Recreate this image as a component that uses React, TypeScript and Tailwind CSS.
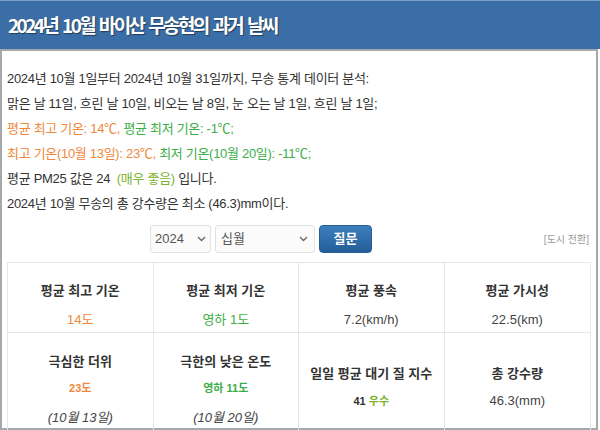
import React from 'react';

const font = { fontFamily: '"Liberation Sans", "Noto Sans CJK KR", sans-serif' };

const Chevron = () => (
  <svg width="9" height="6" viewBox="0 0 9 6" className="text-[#666]">
    <path d="M1 1l3.5 3.5L8 1" fill="none" stroke="currentColor" strokeWidth="1.3" />
  </svg>
);

const App = () => {
  return (
    <div className="w-[600px] h-[430px] overflow-hidden bg-white text-[#333]" style={font}>
      <div className="h-[49px] bg-[#3b6ea6] border-t border-[#7aa0c8] flex items-center pl-[8px]">
        <h1
          className="text-white text-[19px] font-bold tracking-[-2.6px] [word-spacing:3px] [text-shadow:1px_1px_1px_rgba(0,0,0,0.45)]"
          style={{ fontFamily: '"Noto Sans CJK KR", sans-serif' }}
        >
          2024년 10월 바이산 무송현의 과거 날씨
        </h1>
      </div>
      <div className="w-[598px] h-[381px] border-2 border-[#a5a8ad] bg-white">
        <div className="pl-[5px] pt-[15px] text-[13px] leading-[25px] tracking-[-0.3px]">
          <p>2024년 10월 1일부터 2024년 10월 31일까지, 무송 통계 데이터 분석:</p>
          <p>맑은 날 11일, 흐린 날 10일, 비오는 날 8일, 눈 오는 날 1일, 흐린 날 1일;</p>
          <p>
            <span className="text-[#f0883a]">평균 최고 기온: 14℃, </span>
            <span className="text-[#3cae48]">평균 최저 기온: -1℃;</span>
          </p>
          <p>
            <span className="text-[#f0883a]">최고 기온(10월 13일): 23℃, </span>
            <span className="text-[#3cae48]">최저 기온(10월 20일): -11℃;</span>
          </p>
          <p>
            평균 PM25 값은 24 &nbsp;<span className="text-[#7cb32c]">(매우 좋음)</span> 입니다.
          </p>
          <p>2024년 10월 무송의 총 강수량은 최소 (46.3)mm이다.</p>
        </div>
        <div className="flex items-center mt-[9px] pl-[148px] pr-[7px]">
          <div className="w-[61px] h-[28px] border border-[#e2e2e2] bg-[#fbfbfb] rounded-[3px] flex items-center justify-between px-[4px] text-[13px] text-[#555]">
            <span>2024</span>
            <Chevron />
          </div>
          <div className="ml-[4px] w-[100px] h-[28px] border border-[#e2e2e2] bg-[#fbfbfb] rounded-[3px] flex items-center justify-between pl-[5px] pr-[6px] text-[13px] text-[#555]">
            <span>십월</span>
            <Chevron />
          </div>
          <button className="ml-[4px] w-[53px] h-[28px] rounded-[4px] bg-gradient-to-b from-[#3c7fbd] to-[#245e98] border border-[#255d94] text-white text-[13px] font-bold">
            질문
          </button>
          <span className="ml-auto text-[10px] text-[#9a9a9a]">[도시 전환]</span>
        </div>
        <div className="mx-[5px] mt-[9px] grid grid-cols-4 border border-[#e6e6e6] text-center">
          {[
            ['평균 최고 기온', <span className="text-[#f0883a]">14도</span>],
            ['평균 최저 기온', <span className="text-[#3cae48]">영하 1도</span>],
            ['평균 풍속', '7.2(km/h)'],
            ['평균 가시성', '22.5(km)'],
          ].map(([t, v], i) => (
            <div key={i} className={`h-[70px] border-b border-[#e6e6e6] ${i < 3 ? 'border-r' : ''} flex flex-col items-center pt-[19px]`}>
              <div className="text-[13px] font-bold text-[#333] leading-[18px]">{t}</div>
              <div className="mt-[11px] text-[13px] leading-[18px] text-[#444]">{v}</div>
            </div>
          ))}
          <div className="h-[100px] border-r border-[#e6e6e6] flex flex-col items-center pt-[20px]">
            <div className="text-[13px] font-bold leading-[18px]">극심한 더위</div>
            <div className="mt-[9px] text-[11px] font-bold text-[#f0883a] leading-[16px]">23도</div>
            <div className="mt-[13px] text-[13px] italic text-[#444] leading-[18px]">(10월 13일)</div>
          </div>
          <div className="h-[100px] border-r border-[#e6e6e6] flex flex-col items-center pt-[20px]">
            <div className="text-[13px] font-bold leading-[18px]">극한의 낮은 온도</div>
            <div className="mt-[9px] text-[11px] font-bold text-[#3cae48] leading-[16px]">영하 11도</div>
            <div className="mt-[13px] text-[13px] italic text-[#444] leading-[18px]">(10월 20일)</div>
          </div>
          <div className="h-[100px] border-r border-[#e6e6e6] flex flex-col items-center pt-[32px]">
            <div className="text-[13px] font-bold leading-[18px]">일일 평균 대기 질 지수</div>
            <div className="mt-[10px] text-[11px] font-bold leading-[16px]">
              41 <span className="text-[#7cb32c]">우수</span>
            </div>
          </div>
          <div className="h-[100px] flex flex-col items-center pt-[32px]">
            <div className="text-[13px] font-bold leading-[18px]">총 강수량</div>
            <div className="mt-[9px] text-[13px] text-[#444] leading-[18px]">46.3(mm)</div>
          </div>
        </div>
      </div>
    </div>
  );
};

export default App;
